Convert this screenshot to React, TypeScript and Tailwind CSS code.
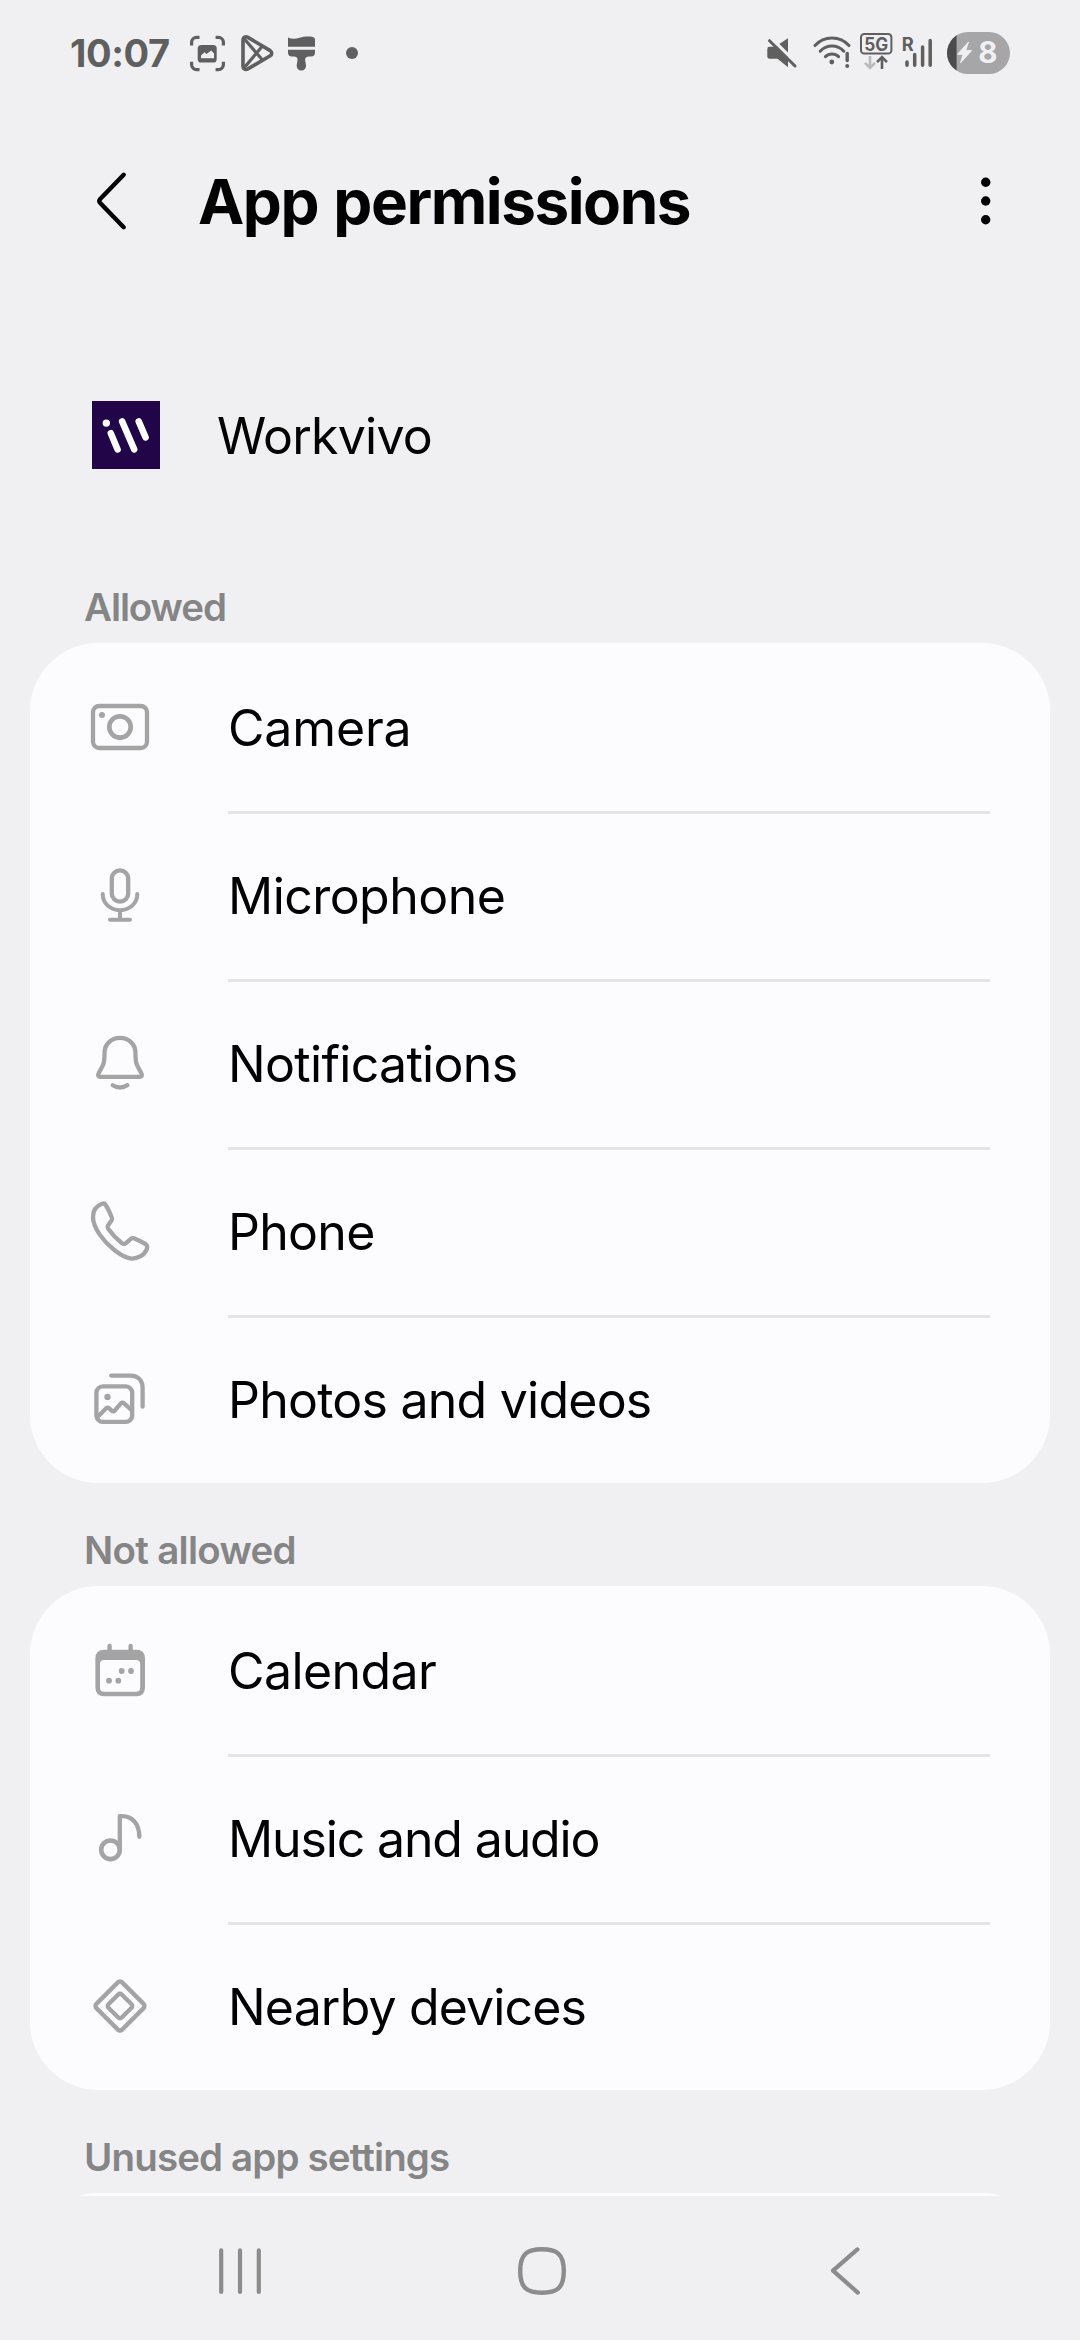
import type { ReactNode } from "react";

function StatusGlyph({ x, w, className = "", children }: { x: number; w: number; className?: string; children: ReactNode }) {
  return (
    <svg viewBox={`${x} 31 ${w} 44`} width={w} height={44} className={`shrink-0 ${className}`} fill="none" stroke="none">
      {children}
    </svg>
  );
}

function StatusBar() {
  const c = "#5f5f60";
  return (
    <div className="flex h-[106px] shrink-0 items-center pl-[70px] pr-[70px]">
      <div className="w-[120px] shrink-0 text-[38px] leading-[46px] font-bold tracking-[-0.4px] text-[#5f5f60]">10:07</div>
      <StatusGlyph x={190} w={36}>
        <path
          d="M191.6 45.5V42.3a5 5 0 0 1 5-5H199.5M215.6 37.3H218.4a5 5 0 0 1 5 5V45.5M191.6 61.8V64.6a5 5 0 0 0 5 5H199.5M215.6 69.6H218.4a5 5 0 0 0 5-5V61.8"
          stroke={c}
          strokeWidth="3.2"
        />
        <rect x="197.7" y="45" width="19" height="17.5" rx="3.6" fill={c} />
        <path d="M201 58.3V55.6L204.6 52.3L206.5 54L211.2 50.6L214 53.4V58.3Z" fill="#f0f0f2" />
      </StatusGlyph>
      <StatusGlyph x={240} w={36} className="ml-[14px]">
        <path
          d="M243 40C243 37 245.5 36 247.9 37.4L270.2 50.6C272.2 52 272.2 54.4 270.2 55.8L247.9 68.9C245.5 70.2 243 69.2 243 66.4Z"
          stroke={c}
          strokeWidth="3.6"
        />
        <path d="M244 38.5L262.5 60M244 68L262.5 46" stroke={c} strokeWidth="3.2" />
      </StatusGlyph>
      <StatusGlyph x={287} w={29} className="ml-[11px]">
        <path d="M288 37.5C292 39.4 296 39 299.5 37.7C304 36.2 309 36.2 312 36.8Q315 37.4 315 40V46.7H288Z" fill={c} />
        <path
          d="M288 49.8H315V52.5Q315 56.5 311 56.5H308.5Q304.6 57 305.2 60.5L306 65.2A4.7 4.7 0 1 1 296.7 65.2L297.5 60.5Q298 57 294.5 56.5H292Q288 56.5 288 52.5Z"
          fill={c}
        />
      </StatusGlyph>
      <StatusGlyph x={345} w={14} className="ml-[29px]">
        <circle cx="352" cy="53" r="6" fill={c} />
      </StatusGlyph>

      <StatusGlyph x={766} w={32} className="ml-auto">
        <path d="M769.6 46.7H775L788 38.3V67.3L777.5 58.7H769.6Q767.3 58.7 767.3 56.4V49Q767.3 46.7 769.6 46.7Z" fill={c} />
        <path d="M771.5 38.5L797 63.8" stroke="#f0f0f2" strokeWidth="3.2" />
        <path d="M769.5 40.7L795 66" stroke={c} strokeWidth="3" strokeLinecap="round" />
      </StatusGlyph>
      <StatusGlyph x={812} w={40} className="ml-[14px]">
        <path
          d="M815 45.6C824 35.6 840 35.6 849 45.6M820.2 51.2C826.6 44.4 837.4 44.4 843.8 51.2M825.4 56.6C829 53 835 53 838.6 56.6"
          stroke={c}
          strokeWidth="3"
          strokeLinecap="round"
        />
        <circle cx="831.8" cy="62" r="2.4" fill={c} />
        <path d="M847.2 53.5V60.6" stroke={c} strokeWidth="3.4" strokeLinecap="round" />
        <circle cx="847.2" cy="66" r="2" fill={c} />
      </StatusGlyph>
      <StatusGlyph x={859} w={34} className="ml-[7px]">
        <rect x="861" y="34" width="30.4" height="19.6" rx="3.2" stroke={c} strokeWidth="2" />
        <text x="864.2" y="51" fontSize="18.5" fontWeight="700" fill={c} textLength="24" lengthAdjust="spacingAndGlyphs">
          5G
        </text>
        <path d="M870 56V67.6M865 62.8L870 67.8L875 62.8" stroke="#b9b9bb" strokeWidth="2.6" />
        <path d="M882 69V57.4M877 62.2L882 57.2L887 62.2" stroke={c} strokeWidth="2.6" />
      </StatusGlyph>
      <StatusGlyph x={901} w={33} className="ml-[8px]">
        <text x="901.8" y="51" fontSize="18.5" fontWeight="700" fill={c} textLength="12" lengthAdjust="spacingAndGlyphs">
          R
        </text>
        <path d="M907 62V65.3M914.7 54.5V65.3M922.6 47V65.3M930.2 40.4V65.3" stroke={c} strokeWidth="3.5" strokeLinecap="round" />
      </StatusGlyph>
      <StatusGlyph x={947} w={63} className="ml-[13px]">
        <clipPath id="pill">
          <rect x="947" y="32" width="63" height="42" rx="21" />
        </clipPath>
        <g clipPath="url(#pill)">
          <rect x="947" y="32" width="63" height="42" fill="#a6a6a8" />
          <rect x="947" y="32" width="9.6" height="42" fill="#4b4b4c" />
        </g>
        <path d="M968.5 42L957.6 54.3H963.2L960.4 63L971.6 50.6H965.6Z" fill="#f0f0f2" stroke="#f0f0f2" strokeLinejoin="round" />
        <text x="978.3" y="63.2" fontSize="29.5" fontWeight="700" fill="#f0f0f2">
          8
        </text>
      </StatusGlyph>
    </div>
  );
}

function Header() {
  return (
    <div className="flex h-[190px] shrink-0 items-center pl-[92px] pr-[76px]">
      <svg viewBox="0 0 36 60" width={36} height={60} fill="none" className="shrink-0">
        <path d="M31.7 3.8L8.2 28Q6.4 30 8.2 32L31.7 56.2" stroke="#000" strokeWidth="4.4" strokeLinecap="round" />
      </svg>
      <h1 className="ml-[70px] pt-[2px] text-[62px] leading-[76px] font-bold tracking-[-1.45px] [word-spacing:2px] whitespace-nowrap text-black">
        App permissions
      </h1>
      <svg viewBox="0 0 36 60" width={36} height={60} className="ml-auto shrink-0">
        <circle cx="17.7" cy="11.2" r="4.7" />
        <circle cx="17.7" cy="30" r="4.7" />
        <circle cx="17.7" cy="48.8" r="4.7" />
      </svg>
    </div>
  );
}

function AppRow() {
  return (
    <div className="flex h-[244px] shrink-0 items-start pl-[92px] pt-[105px]">
      <svg viewBox="0 0 68 68" width={68} height={68} className="shrink-0">
        <rect width="68" height="68" fill="#220549" />
        <circle cx="14.3" cy="22.1" r="3.7" fill="#fff" />
        <path d="M18.8 32.2L25.6 48.4M30.1 20.4L42.2 48.4M46.7 20.4L53.6 36.4" stroke="#fff" strokeWidth="6.5" strokeLinecap="round" />
      </svg>
      <div className="ml-[57px] pt-[1px] text-[50px] leading-[68px] tracking-[-0.75px] text-black">Workvivo</div>
    </div>
  );
}

const icons: Record<string, ReactNode> = {
  camera: (
    <>
      <rect x="9" y="15" width="54" height="42" rx="6.3" />
      <circle cx="36" cy="36" r="10.7" strokeWidth="4.7" />
      <circle cx="18" cy="24" r="3" fill="#a4a4a5" stroke="none" />
    </>
  ),
  microphone: (
    <>
      <rect x="27.8" y="11.4" width="16.4" height="31.2" rx="8.2" />
      <path d="M18.7 35C18.7 44.4 26.4 51.2 36 51.2S53.3 44.4 53.3 35M36 51.2V60.8M26 60.8H46" strokeWidth="4" />
    </>
  ),
  bell: (
    <>
      <path d="M36 10.8C27 10.8 20.8 17.5 20.6 25C20.5 31 20.5 34.5 19.2 37.5C17.8 40.8 15.6 43.8 14.3 47.2C13.8 48.6 14.6 49.8 16 49.8H56C57.4 49.8 58.2 48.6 57.7 47.2C56.4 43.8 54.2 40.8 52.8 37.5C51.5 34.5 51.5 31 51.4 25C51.2 17.5 45 10.8 36 10.8Z" />
      <path d="M28.8 58.2Q36 62.8 43.4 58.2" />
    </>
  ),
  phone: (
    <path d="M17.5 8.9C12 11 9 16 9 22C9 33 20 47 30 54.8C36 59.5 42 62.8 46 63.4C53 64.3 60.5 60.5 62.9 54C63.5 52 63 50 61.5 49C57.5 46.8 54 45 50 43.3C48.8 42.9 47.8 43 46.8 43.9L42 48.2C40.8 49.2 39.2 49.2 38 48.2C32 43.5 27.5 38.5 24.2 33.8C23.4 32.6 23.3 31.6 24 30.4L27.5 25.5C28.2 24.4 28.2 23.4 27.7 22.3C26 17.8 24 13.5 21.7 10C20.7 8.5 19.2 8.2 17.5 8.9Z" />
  ),
  photos: (
    <>
      <rect x="12.4" y="23.3" width="35.8" height="35.6" rx="6.5" />
      <path d="M27.2 12.6H46.6C54 12.6 58.6 17.5 58.6 25V43.7" />
      <circle cx="23.5" cy="34" r="3.2" fill="#a4a4a5" stroke="none" />
      <path d="M13.5 54L22 45.4Q23.6 43.9 25.2 45.4L27.6 47.6Q29.3 49 30.9 47.4L36.9 40.4Q38.5 38.9 40.1 40.4L47.5 47" />
    </>
  ),
  calendar: (
    <>
      <path
        d="M20.3 15.7H52.3Q61 15.7 61 24.5V53.5Q61 62.3 52.3 62.3H20.3Q11.4 62.3 11.4 53.5V24.5Q11.4 15.7 20.3 15.7ZM20 26Q16 26 16 30V53.7Q16 57.8 20 57.8H52Q56.2 57.8 56.2 53.7V30Q56.2 26 52 26Z"
        fill="#a4a4a5"
        fillRule="evenodd"
        stroke="none"
      />
      <path d="M25.6 11.9V18M46.6 11.9V18" />
      <g fill="#a4a4a5" stroke="none">
        <circle cx="37.7" cy="37" r="2.9" />
        <circle cx="47" cy="37" r="2.9" />
        <circle cx="25" cy="46.7" r="2.9" />
        <circle cx="34.3" cy="46.7" r="2.9" />
      </g>
    </>
  ),
  music: (
    <>
      <circle cx="26.5" cy="47.8" r="9.3" strokeWidth="4.6" />
      <path d="M35.8 47.8V14.2H38C48.5 14.2 55.3 22 55.3 34.8" />
    </>
  ),
  nearby: (
    <>
      <rect x="17.8" y="17.8" width="36.4" height="36.4" rx="3" transform="rotate(45 36 36)" />
      <rect x="26.6" y="26.6" width="18.8" height="18.8" rx="2.4" transform="rotate(45 36 36)" />
    </>
  ),
};

function Row({ icon, label, tracking, divider }: { icon: string; label: string; tracking: string; divider: boolean }) {
  return (
    <div className="flex h-[168px] items-center pl-[54px]">
      <svg
        viewBox="0 0 72 72"
        width={72}
        height={72}
        className="shrink-0"
        fill="none"
        stroke="#a4a4a5"
        strokeWidth="4.3"
        strokeLinecap="round"
        strokeLinejoin="round"
      >
        {icons[icon]}
      </svg>
      <div
        className={`ml-[72px] mr-[60px] flex h-full flex-1 items-center border-t-[3px] pb-[2px] ${divider ? "border-[#e4e4e6]" : "border-transparent"}`}
      >
        <span className={`text-[50px] leading-[60px] whitespace-nowrap text-black ${tracking}`}>{label}</span>
      </div>
    </div>
  );
}

function SectionTitle({ label, tracking }: { label: string; tracking: string }) {
  return (
    <div className="flex h-[103px] shrink-0 items-center pl-[84px] pt-[32px]">
      <h2 className={`text-[38.5px] leading-[47px] font-semibold whitespace-nowrap text-[#858586] ${tracking}`}>{label}</h2>
    </div>
  );
}

const allowed = [
  { icon: "camera", label: "Camera", tracking: "tracking-[-0.15px]" },
  { icon: "microphone", label: "Microphone", tracking: "tracking-[-0.54px]" },
  { icon: "bell", label: "Notifications", tracking: "tracking-[-0.68px]" },
  { icon: "phone", label: "Phone", tracking: "tracking-[-0.71px]" },
  { icon: "photos", label: "Photos and videos", tracking: "tracking-[-0.76px]" },
];

const notAllowed = [
  { icon: "calendar", label: "Calendar", tracking: "tracking-[-0.6px]" },
  { icon: "music", label: "Music and audio", tracking: "tracking-[-1.14px]" },
  { icon: "nearby", label: "Nearby devices", tracking: "tracking-[-0.84px]" },
];

function Card({ items }: { items: typeof allowed }) {
  return (
    <div className="mx-[30px] shrink-0 rounded-[68px] bg-[#fcfcfe]">
      {items.map((item, i) => (
        <Row key={item.label} {...item} divider={i > 0} />
      ))}
    </div>
  );
}

function NavBar() {
  return (
    <div className="flex h-[144px] shrink-0 items-start bg-[#f0f0f2] pl-[204px] pt-[39px]">
      <svg viewBox="0 0 72 72" width={72} height={72} fill="none" stroke="#8c8c8d" strokeWidth="4.2" strokeLinecap="round">
        <path d="M17.2 15.4V57M36 15.4V57M54.8 15.4V57" />
      </svg>
      <svg viewBox="0 0 72 72" width={72} height={72} fill="none" stroke="#8c8c8d" strokeWidth="4.4" className="ml-[230px]">
        <path d="M36 14.3C50.5 14.3 57.8 18.5 57.8 36S50.5 57.7 36 57.7S14.2 53.5 14.2 36S21.5 14.3 36 14.3Z" />
      </svg>
      <svg
        viewBox="0 0 72 72"
        width={72}
        height={72}
        fill="none"
        stroke="#8c8c8d"
        strokeWidth="4.2"
        strokeLinecap="round"
        strokeLinejoin="round"
        className="ml-[231px]"
      >
        <path d="M48.4 14.4L24 35.6L48.8 57.6" />
      </svg>
    </div>
  );
}

export default function App() {
  return (
    <div className="flex h-[2340px] w-[1080px] flex-col overflow-hidden bg-[#f0f0f2] font-['Inter',sans-serif]">
      <StatusBar />
      <Header />
      <AppRow />
      <SectionTitle label="Allowed" tracking="tracking-[-1.1px]" />
      <Card items={allowed} />
      <SectionTitle label="Not allowed" tracking="tracking-[-0.7px]" />
      <Card items={notAllowed} />
      <SectionTitle label="Unused app settings" tracking="tracking-[-0.86px]" />
      <div className="h-[3px] shrink-0 overflow-hidden px-[30px]">
        <div className="h-[168px] rounded-t-[68px] bg-[#fcfcfe]" />
      </div>
      <NavBar />
    </div>
  );
}
